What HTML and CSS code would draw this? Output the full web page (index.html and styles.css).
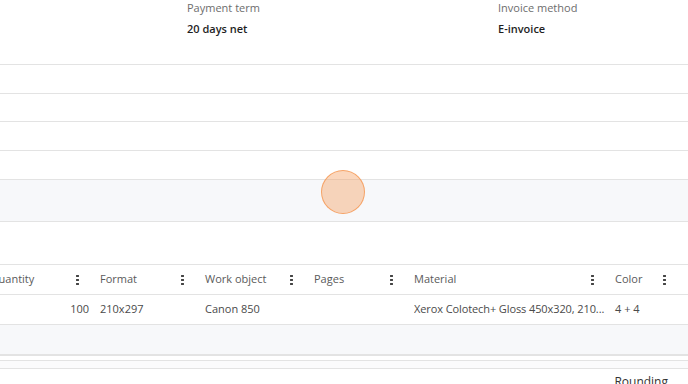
FILE: index.html
```html
<!DOCTYPE html>
<html lang="en">
<head>
    <meta charset="UTF-8">
    <title>Order details</title>
    <link rel="stylesheet" href="styles.css">
</head>
<body>
    <div class="page">
        <div class="info">
            <div class="field field-term">
                <div class="field-label">Payment term</div>
                <div class="field-value">20 days net</div>
            </div>
            <div class="field field-method">
                <div class="field-label">Invoice method</div>
                <div class="field-value">E-invoice</div>
            </div>
        </div>

        <div class="line-row"></div>
        <div class="line-row"></div>
        <div class="line-row"></div>
        <div class="line-row"></div>
        <div class="band"></div>
        <div class="spacer"></div>

        <div class="grid">
            <div class="grid-head">
                <div class="cell col-qty">Quantity<span class="kebab"></span></div>
                <div class="cell col-format">Format<span class="kebab"></span></div>
                <div class="cell col-work">Work object<span class="kebab"></span></div>
                <div class="cell col-pages">Pages<span class="kebab"></span></div>
                <div class="cell col-material">Material<span class="kebab"></span></div>
                <div class="cell col-color">Color<span class="kebab"></span></div>
            </div>
            <div class="grid-row">
                <div class="cell col-qty num">100</div>
                <div class="cell col-format">210x297</div>
                <div class="cell col-work">Canon 850</div>
                <div class="cell col-pages"></div>
                <div class="cell col-material"><span class="clip">Xerox Colotech+ Gloss 450x320, 210...</span></div>
                <div class="cell col-color">4 + 4</div>
            </div>
            <div class="grid-foot"></div>
        </div>

        <div class="scrollbar"></div>

        <div class="totals">
            <div class="totals-label">Rounding</div>
        </div>
    </div>

    <div class="click-marker"></div>
</body>
</html>
```

FILE: styles.css
```css
* {
    margin: 0;
    padding: 0;
    box-sizing: border-box;
}

body {
    font-family: 'Open Sans', 'DejaVu Sans', sans-serif;
    font-size: 11px;
    color: #333;
    background: white;
    overflow: hidden;
    width: 688px;
    height: 384px;
}

.page {
    width: 688px;
}

.info {
    display: flex;
    height: 65px;
    padding-left: 187px;
    border-bottom: 1px solid #e3e3e3;
}

.field-term {
    width: 311px;
}

.field-label {
    color: #6d6d6d;
    line-height: 16px;
}

.field-value {
    margin-top: 5px;
    font-weight: 600;
    color: #1f1f1f;
    line-height: 16px;
}

.line-row {
    height: 29px;
    border-bottom: 1px solid #e3e3e3;
}

.line-row:nth-child(3) {
    height: 28px;
}

.band {
    height: 42px;
    background: #f7f8fa;
    border-bottom: 1px solid #e3e3e3;
}

.spacer {
    height: 43px;
    border-bottom: 1px solid #e3e3e3;
}

.grid {
    margin-left: -18px;
}

.grid-head,
.grid-row {
    display: flex;
    height: 30px;
    border-bottom: 1px solid #e3e3e3;
}

.cell {
    position: relative;
    padding: 0 8px;
    line-height: 28px;
    white-space: nowrap;
    color: #5a5a5a;
}

.grid-row .cell {
    line-height: 27px;
    color: #4a4a4a;
}

.col-qty { width: 110px; }
.col-format { width: 105px; }
.col-work { width: 109px; }
.col-pages { width: 100px; }
.col-material { width: 201px; }
.col-color { width: 72px; }

.grid-row .num {
    text-align: right;
    padding-right: 3px;
}

.clip {
    display: block;
    overflow: hidden;
    margin-right: -7px;
    letter-spacing: -0.1px;
}

.kebab {
    position: absolute;
    right: 13px;
    top: 9px;
    width: 3px;
    height: 11px;
    background: radial-gradient(circle, #444 1.1px, transparent 1.4px) 0 0 / 3px 4px repeat-y;
}

.grid-foot {
    height: 31px;
    background: #f7f8fa;
    border-bottom: 2px solid #e3e3e3;
}

.scrollbar {
    margin-top: 4px;
    height: 9px;
    background: #fbfbfc;
    border-top: 1px solid #e3e3e3;
    border-bottom: 1px solid #e3e3e3;
}

.totals {
    display: flex;
    justify-content: flex-end;
    padding-right: 20px;
    padding-top: 4px;
}

.totals-label {
    color: #333;
    font-size: 12px;
}

.click-marker {
    position: absolute;
    left: 321px;
    top: 170px;
    width: 44px;
    height: 44px;
    border-radius: 50%;
    background: rgba(246, 155, 90, 0.4);
    border: 1.5px solid rgba(245, 150, 80, 0.8);
}
```
